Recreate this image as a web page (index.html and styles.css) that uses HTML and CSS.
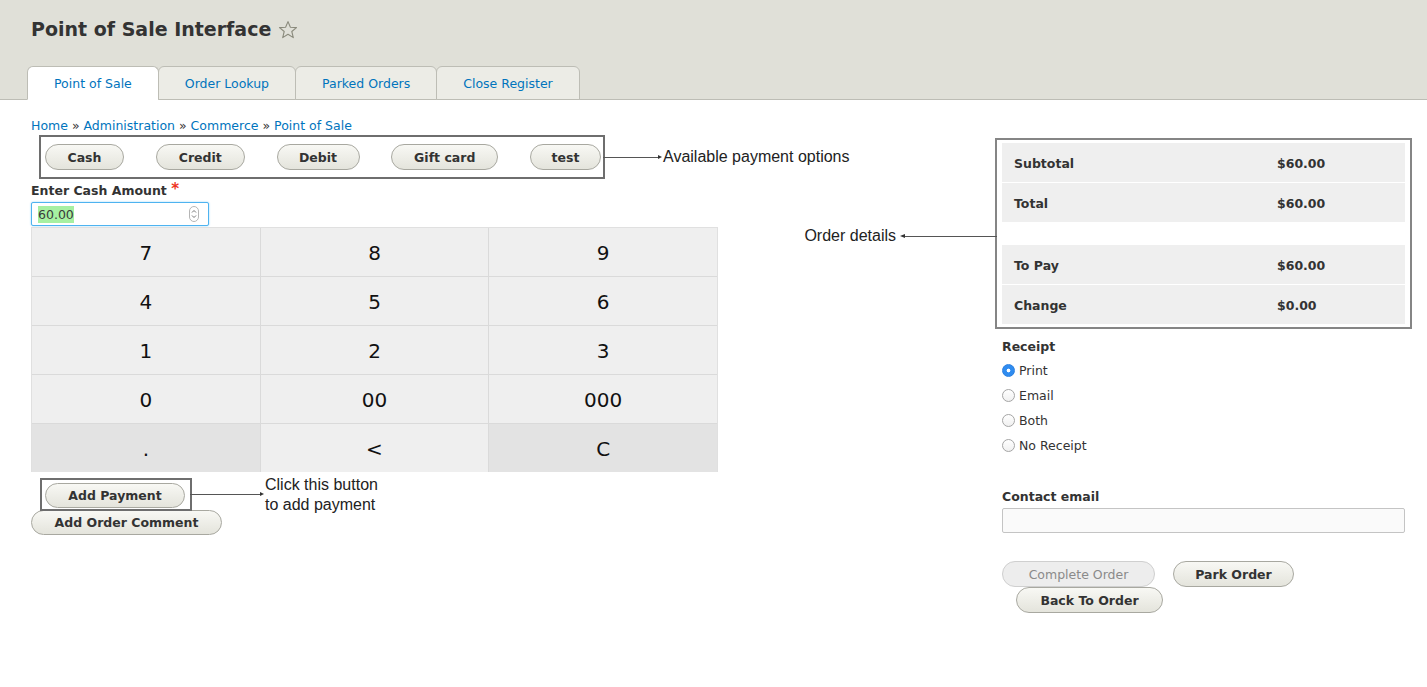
FILE: index.html
```html
<!DOCTYPE html>
<html lang="en">
<head>
<meta charset="utf-8">
<title>Point of Sale Interface</title>
<link rel="stylesheet" href="styles.css">
</head>
<body>
<header class="header">
  <h1 class="title">Point of Sale Interface
    <svg class="star" viewBox="0 0 20 20" width="20" height="20"><path d="M10 1.6 L12.4 7.3 L18.5 7.6 L13.8 11.5 L15.3 17.6 L10 14.3 L4.7 17.6 L6.2 11.5 L1.5 7.6 L7.6 7.3 Z" fill="none" stroke="#8a8a7c" stroke-width="1.1" stroke-linejoin="round"/></svg>
  </h1>
  <nav class="tabs">
    <a class="tab active">Point of Sale</a>
    <a class="tab">Order Lookup</a>
    <a class="tab">Parked Orders</a>
    <a class="tab">Close Register</a>
  </nav>
</header>

<main class="main">
  <section class="left">
    <div class="crumbs"><a>Home</a> » <a>Administration</a> » <a>Commerce</a> » <a>Point of Sale</a></div>

    <div class="paybox">
      <button class="btn btn-cash">Cash</button>
      <button class="btn btn-credit">Credit</button>
      <button class="btn btn-debit">Debit</button>
      <button class="btn btn-gift">Gift card</button>
      <button class="btn btn-test">test</button>
      <div class="note note-right note-pay">
        <span class="line line-55"></span><span class="head-r"></span><span class="note-text">Available payment options</span>
      </div>
    </div>

    <label class="label">Enter Cash Amount <span class="req">*</span></label>
    <div class="amount">
      <span class="sel">60.00</span>
      <svg class="spin" viewBox="0 0 10 16" width="10" height="16"><rect x="0.5" y="0.5" width="9" height="15" rx="4.5" fill="#fff" stroke="#b5b5b5"/><path d="M3 6.5 L5 4.5 L7 6.5 M3 9.5 L5 11.5 L7 9.5" fill="none" stroke="#666" stroke-width="0.9"/></svg>
    </div>

    <div class="keypad">
      <div class="key">7</div><div class="key">8</div><div class="key">9</div>
      <div class="key">4</div><div class="key">5</div><div class="key">6</div>
      <div class="key">1</div><div class="key">2</div><div class="key">3</div>
      <div class="key">0</div><div class="key">00</div><div class="key">000</div>
      <div class="key dark">.</div><div class="key">&lt;</div><div class="key dark">C</div>
    </div>

    <div class="addbox">
      <button class="btn btn-add">Add Payment</button>
      <div class="note note-right note-add">
        <span class="line line-70"></span><span class="head-r"></span><span class="note-text">Click this button<br>to add payment</span>
      </div>
    </div>
    <button class="btn btn-comment">Add Order Comment</button>
  </section>

  <aside class="right">
    <div class="summary">
      <div class="note note-left">
        <span class="note-text">Order details</span><span class="head-l"></span><span class="line line-92"></span>
      </div>
      <div class="row"><span class="k">Subtotal</span><span class="v">$60.00</span></div>
      <div class="row"><span class="k">Total</span><span class="v">$60.00</span></div>
      <div class="spacer"></div>
      <div class="row"><span class="k">To Pay</span><span class="v">$60.00</span></div>
      <div class="row"><span class="k">Change</span><span class="v">$0.00</span></div>
    </div>

    <div class="label receipt-label">Receipt</div>
    <div class="radios">
      <label class="radio"><input type="radio" name="r" checked><span>Print</span></label>
      <label class="radio"><input type="radio" name="r"><span>Email</span></label>
      <label class="radio"><input type="radio" name="r"><span>Both</span></label>
      <label class="radio"><input type="radio" name="r"><span>No Receipt</span></label>
    </div>

    <div class="label email-label">Contact email</div>
    <input class="email" type="text">

    <div class="actions">
      <button class="btn btn-complete" disabled>Complete Order</button>
      <button class="btn btn-park">Park Order</button>
      <button class="btn btn-back">Back To Order</button>
    </div>
  </aside>
</main>
</body>
</html>
```

FILE: styles.css
```css
html, body {
  margin: 0;
  padding: 0;
  background: #fff;
}
body {
  font-family: "DejaVu Sans", "Open Sans", sans-serif;
  font-size: 12.5px;
  color: #333;
}

/* header */
.header {
  background: #e0e0d8;
  border-bottom: 1px solid #bdbdb5;
  padding-top: 17px;
}
.title {
  margin: 0 0 0 31px;
  font-size: 19px;
  line-height: 24px;
  font-weight: bold;
  color: #333;
  display: flex;
  align-items: center;
  gap: 7px;
}
.star {
  display: block;
  margin-top: 1px;
}
.tabs {
  display: flex;
  margin: 25px 0 -1px 27px;
}
.tab {
  display: flex;
  align-items: center;
  justify-content: center;
  box-sizing: border-box;
  height: 34px;
  padding: 1px 26px 0;
  background: #ecece6;
  border: 1px solid #bdbdb5;
  border-radius: 6px 6px 0 0;
  margin-left: -1px;
  color: #0074bd;
  font-size: 12.5px;
}
.tab:first-child {
  margin-left: 0;
}
.tab.active {
  background: #fff;
  border-bottom-color: #fff;
}

/* main layout */
.main {
  display: flex;
  padding: 18px 22px 0 31px;
}
.left {
  width: 687px;
  display: flex;
  flex-direction: column;
  align-items: flex-start;
}
.right {
  width: 403px;
  margin-left: auto;
  padding-top: 20px;
}

a {
  color: #0074bd;
  text-decoration: none;
}
.crumbs {
  line-height: 16px;
  color: #333;
}

/* buttons */
.btn {
  display: inline-flex;
  align-items: center;
  justify-content: center;
  box-sizing: border-box;
  height: 26px;
  padding: 0 20px;
  border: 1px solid #a8a8a0;
  border-radius: 13px;
  background: linear-gradient(#f8f8f4, #e4e4dc);
  font-family: "DejaVu Sans", "Open Sans", sans-serif;
  font-weight: bold;
  font-size: 12.5px;
  color: #333;
  white-space: nowrap;
}

/* payment options */
.paybox {
  position: relative;
  box-sizing: border-box;
  width: 566px;
  margin: 1px 0 0 8px;
  padding: 7px 2px 7px 4px;
  border: 2px solid #6e6e6e;
  display: flex;
  justify-content: space-between;
}
.btn-cash { width: 79px; }
.btn-credit { width: 89px; }
.btn-debit { width: 83px; }
.btn-gift { width: 107px; }
.btn-test { width: 71px; }

/* annotations */
.note {
  position: absolute;
  display: flex;
  align-items: center;
  font-family: "Liberation Sans", Arial, sans-serif;
  font-size: 16px;
  color: #222;
  white-space: nowrap;
}
.note-pay {
  left: 100%;
  top: 50%;
  margin-top: -10px;
  line-height: 20px;
}
.note-add {
  left: 100%;
  top: -5px;
  align-items: flex-start;
  line-height: 20px;
}
.note-add .line {
  margin-top: 19px;
}
.note-add .head-r {
  margin-top: 17px;
}
.note-left {
  right: 100%;
  top: 86px;
  line-height: 20px;
}
.line {
  display: block;
  height: 1px;
  background: #555;
}
.line-55 { width: 55px; }
.line-70 { width: 70px; }
.line-92 { width: 92px; }
.head-r {
  display: block;
  width: 0;
  height: 0;
  border-top: 2.5px solid transparent;
  border-bottom: 2.5px solid transparent;
  border-left: 4px solid #333;
  margin-right: 1px;
}
.head-l {
  display: block;
  width: 0;
  height: 0;
  border-top: 2.5px solid transparent;
  border-bottom: 2.5px solid transparent;
  border-right: 5px solid #333;
  margin-left: 4px;
}

/* amount */
.label {
  display: block;
  font-weight: bold;
  line-height: 16px;
  height: 16px;
  color: #333;
}
.left .label {
  margin-top: 4px;
}
.req {
  color: #e32;
  font-size: 15px;
  line-height: 0;
  vertical-align: 1px;
}
.amount {
  box-sizing: border-box;
  width: 178px;
  height: 24px;
  margin-top: 3px;
  padding: 0 9px 0 6px;
  border: 1px solid #4eb3f0;
  border-radius: 2px;
  box-shadow: 0 0 2px #8fd0f7;
  display: flex;
  align-items: center;
  background: #fff;
}
.sel {
  background: #a6f0a2;
  color: #3a3a3a;
  font-size: 12.5px;
  line-height: 17px;
}
.spin {
  margin-left: auto;
  display: block;
}

/* keypad */
.keypad {
  margin-top: 1px;
  width: 687px;
  box-sizing: border-box;
  display: grid;
  grid-template-columns: 1fr 1fr 1fr;
  grid-auto-rows: 48px;
  gap: 1px;
  background: #dadada;
  border: 1px solid #e0e0e0;
  border-bottom: none;
}
.key {
  background: #efefef;
  display: flex;
  align-items: center;
  justify-content: center;
  padding-top: 2px;
  box-sizing: border-box;
  font-size: 20px;
  color: #111;
}
.key.dark {
  background: #e3e3e3;
}

/* add payment */
.addbox {
  position: relative;
  margin: 6px 0 0 9px;
  padding: 3px 5px 1px 3px;
  border: 2px solid #6e6e6e;
}
.btn-add {
  width: 140px;
  height: 25px;
}
.btn-comment {
  width: 191px;
  height: 25px;
  margin-top: -1px;
}

/* summary */
.summary {
  position: relative;
  margin: 0 -7px;
  padding: 3px 5px 2px;
  border: 2px solid #858585;
}
.row {
  display: flex;
  align-items: center;
  height: 40px;
  box-sizing: border-box;
  border-bottom: 1px solid #fff;
  background: #efefef;
  font-weight: bold;
  color: #333;
  padding-top: 1px;
}
.row .k {
  width: 263px;
  padding-left: 12px;
}
.spacer {
  height: 22px;
}

/* receipt */
.receipt-label {
  margin-top: 10px;
}
.radios {
  margin-top: 3px;
}
.radio {
  display: flex;
  align-items: center;
  height: 25px;
}
.radio input {
  -webkit-appearance: none;
  appearance: none;
  box-sizing: border-box;
  width: 13px;
  height: 13px;
  margin: 0 4px 0 0;
  border: 1px solid #a5a5a5;
  border-radius: 50%;
  background: linear-gradient(#fff, #f0f0f0);
}
.radio input:checked {
  border-color: #2a7fe0;
  background: radial-gradient(circle, #fff 0 1.6px, #2f8cf0 2.2px);
}
.email-label {
  margin-top: 31px;
}
.email {
  display: block;
  box-sizing: border-box;
  width: 403px;
  height: 25px;
  margin-top: 3px;
  border: 1px solid #c4c4c4;
  border-radius: 2px;
  background: #fafafa;
}

.actions {
  margin-top: 28px;
  display: flex;
  flex-wrap: wrap;
  column-gap: 18px;
}
.btn-complete {
  width: 153px;
  font-weight: normal;
  color: #8a8a8a;
  background: #ededed;
  border-color: #cfcfcf;
}
.btn-park {
  width: 121px;
}
.btn-back {
  width: 147px;
  margin-left: 14px;
}
```
